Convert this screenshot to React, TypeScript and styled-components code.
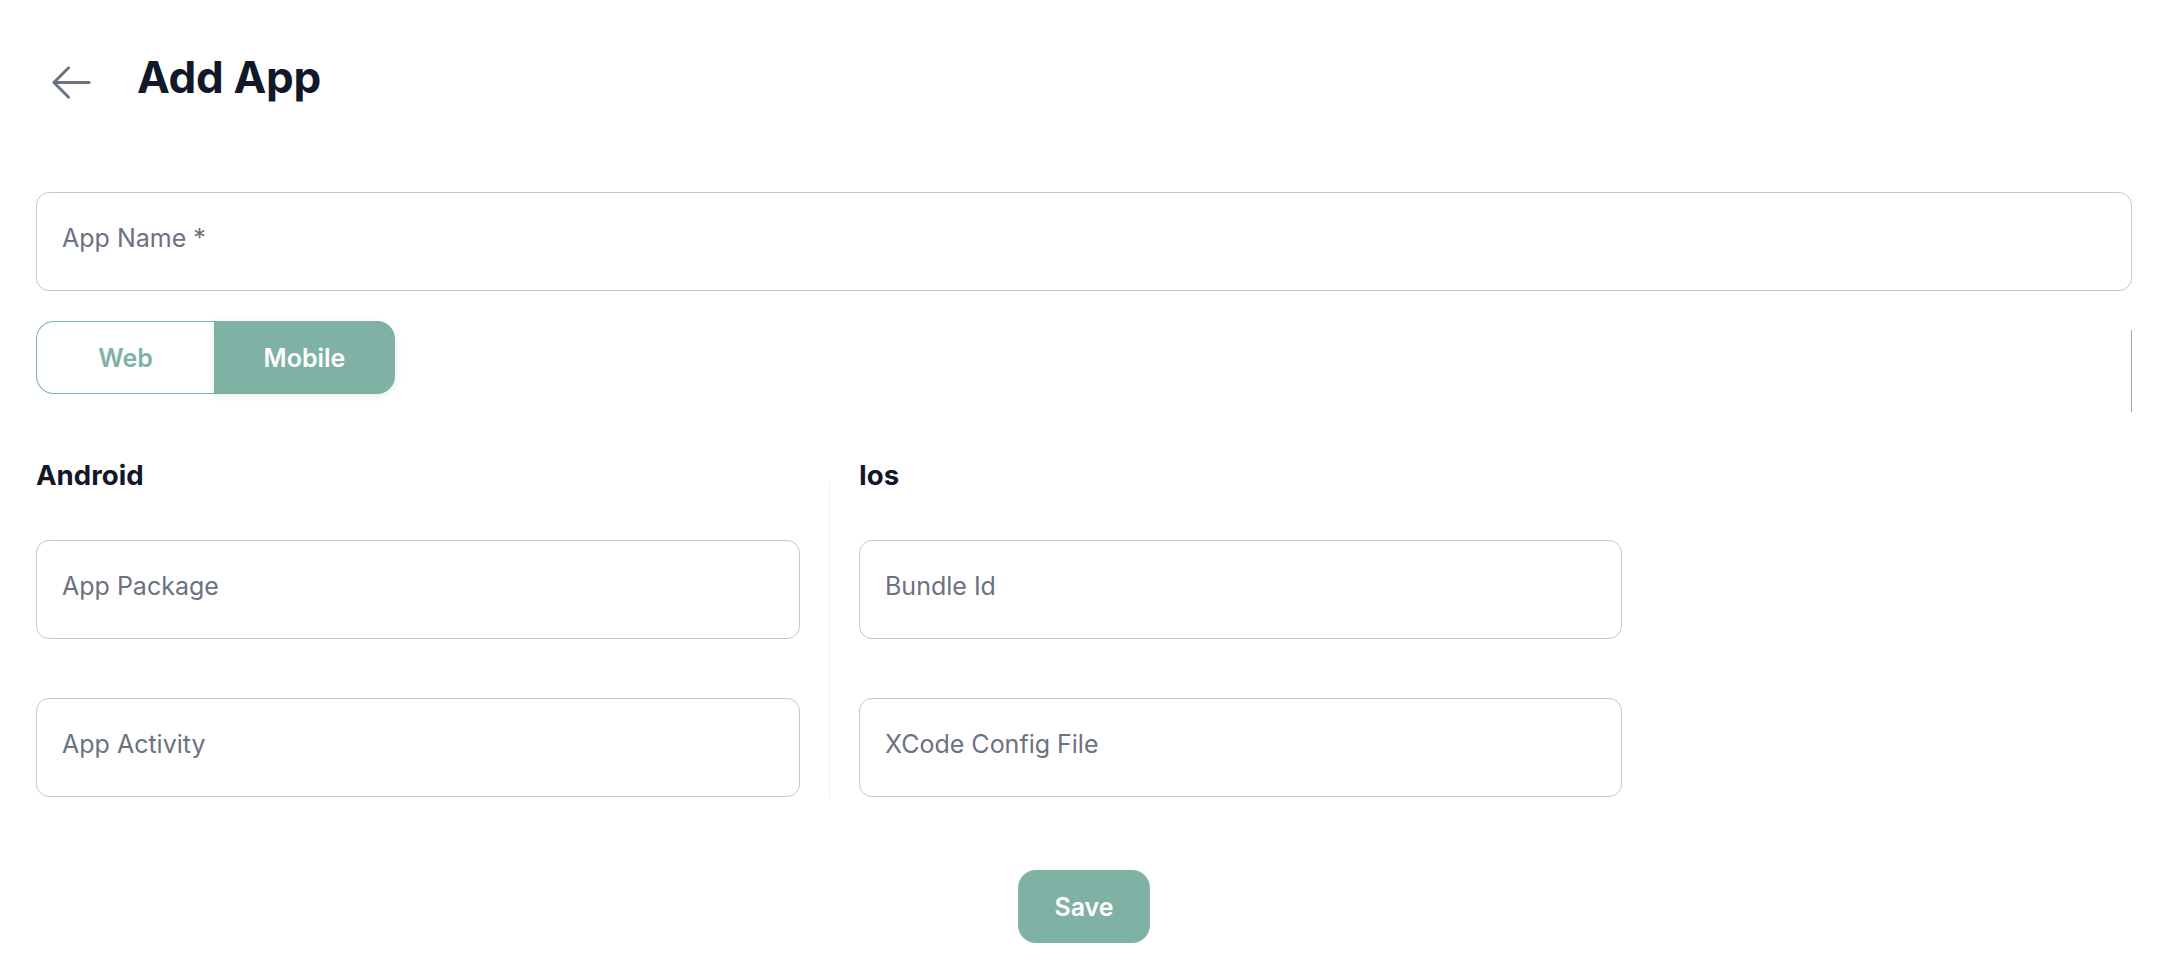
import React from 'react';
import styled, { createGlobalStyle } from 'styled-components';

const GlobalStyle = createGlobalStyle`
  html, body {
    margin: 0;
    padding: 0;
    background: #ffffff;
    font-family: Inter, "Noto Sans", "Liberation Sans", sans-serif;
  }
  * {
    box-sizing: border-box;
  }
`;

const green = '#7fb2a5';

const Page = styled.div`
  padding: 48px 34px 0 36px;
`;

const HeaderRow = styled.div`
  display: flex;
  align-items: center;
  gap: 42px;
`;

const BackButton = styled.button`
  display: flex;
  margin: 11px 0 0 12px;
  padding: 0;
  border: none;
  background: none;
  color: #6b7280;
  cursor: pointer;
`;

const Title = styled.h1`
  margin: 0;
  font-size: 44px;
  font-weight: 700;
  line-height: normal;
  color: #111827;
  letter-spacing: -0.3px;
`;

const TextField = styled.input`
  display: block;
  width: 100%;
  height: 99px;
  padding: 0 24px 7px 25px;
  border: 1px solid #c6c6c6;
  border-radius: 13px;
  font-family: inherit;
  font-size: 25px;
  color: #111827;
  background: #fff;
  outline: none;
  &::placeholder {
    color: #6b7280;
  }
`;

const NameField = styled(TextField)`
  margin-top: 86px;
`;

const ToggleRow = styled.div`
  display: flex;
  justify-content: space-between;
  margin-top: 30px;
`;

const Toggle = styled.div`
  display: flex;
  height: 73px;
`;

const Segment = styled.button<{ $active?: boolean; $side: 'left' | 'right' }>`
  width: ${({ $side }) => ($side === 'left' ? '178px' : '181px')};
  height: 100%;
  font-family: inherit;
  font-size: 25px;
  font-weight: 600;
  cursor: pointer;
  border: ${({ $active }) => ($active ? 'none' : `1.5px solid ${green}`)};
  border-right: none;
  border-radius: ${({ $side }) => ($side === 'left' ? '18px 0 0 18px' : '0 18px 18px 0')};
  background: ${({ $active }) => ($active ? green : '#fff')};
  color: ${({ $active }) => ($active ? '#fff' : green)};
  box-shadow: ${({ $active }) => ($active ? '0 2px 8px rgba(0, 0, 0, 0.08)' : 'none')};
`;

const EdgeLine = styled.div`
  width: 1px;
  height: 82px;
  margin-top: 9px;
  background: #a8a8a8;
`;

const Platforms = styled.div`
  display: flex;
  margin-top: 46px;
`;

const Column = styled.div<{ $width: number }>`
  width: ${({ $width }) => $width}px;
  display: flex;
  flex-direction: column;
`;

const Divider = styled.div`
  width: 1px;
  margin: 24px 29px 0;
  background: #f1f1f1;
`;

const ColumnTitle = styled.h2`
  margin: 0 0 48px;
  font-size: 27.6px;
  font-weight: 700;
  line-height: normal;
  color: #111827;
`;

const Stack = styled.div`
  display: flex;
  flex-direction: column;
  gap: 59px;
`;

const Footer = styled.div`
  display: flex;
  justify-content: center;
  margin-top: 73px;
`;

const SaveButton = styled.button`
  width: 132px;
  height: 73px;
  border: none;
  border-radius: 18px;
  background: ${green};
  color: #fff;
  font-family: inherit;
  font-size: 25px;
  font-weight: 600;
  cursor: pointer;
`;

function ArrowLeftIcon() {
  return (
    <svg width="47" height="47" viewBox="0 0 24 24" fill="none" stroke="currentColor" strokeWidth={1.5} strokeLinecap="round" strokeLinejoin="round">
      <path d="M10.5 19.5 3 12m0 0 7.5-7.5M3 12h18" />
    </svg>
  );
}

export default function App() {
  return (
    <>
      <GlobalStyle />
      <Page>
        <HeaderRow>
          <BackButton aria-label="Back">
            <ArrowLeftIcon />
          </BackButton>
          <Title>Add App</Title>
        </HeaderRow>

        <NameField placeholder="App Name *" />

        <ToggleRow>
          <Toggle>
            <Segment $side="left">Web</Segment>
            <Segment $side="right" $active>
              Mobile
            </Segment>
          </Toggle>
          <EdgeLine />
        </ToggleRow>

        <Platforms>
          <Column $width={764}>
            <ColumnTitle>Android</ColumnTitle>
            <Stack>
              <TextField placeholder="App Package" />
              <TextField placeholder="App Activity" />
            </Stack>
          </Column>
          <Divider />
          <Column $width={763}>
            <ColumnTitle>Ios</ColumnTitle>
            <Stack>
              <TextField placeholder="Bundle Id" />
              <TextField placeholder="XCode Config File" />
            </Stack>
          </Column>
        </Platforms>

        <Footer>
          <SaveButton>Save</SaveButton>
        </Footer>
      </Page>
    </>
  );
}
